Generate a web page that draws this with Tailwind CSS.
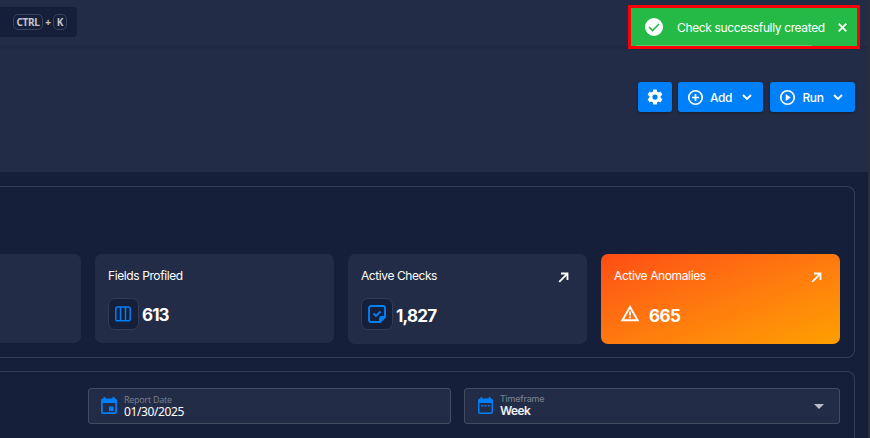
<!DOCTYPE html>
<html lang="en">
<head>
<meta charset="utf-8">
<title>Dashboard</title>
<script src="https://cdn.jsdelivr.net/npm/@tailwindcss/browser@4"></script>
</head>
<body class="relative flex h-[438px] w-[870px] overflow-hidden bg-[#161f39] font-['Inter',sans-serif] text-white">
<div class="flex w-[868px] flex-col">
  <header class="h-[172px] shrink-0 bg-[#232c46]">
    <div class="flex h-[46px] items-start pt-[7px] shadow-[0_1px_3px_rgba(15,20,40,0.3)]">
      <div class="flex h-[30px] w-[77px] items-center rounded-r-[4px] bg-[#161f39] pl-[13px] text-[10px] font-bold text-[#c3c6cf] font-['Noto_Sans',sans-serif]">
        <kbd class="flex h-4 w-[30px] items-center justify-center rounded-[5px] border border-[#3c445b] font-['Noto_Sans',sans-serif] tracking-[-0.35px]">CTRL</kbd>
        <span class="w-[10px] text-center">+</span>
        <kbd class="flex h-4 w-[14px] items-center justify-center rounded-[5px] border border-[#3c445b] font-['Noto_Sans',sans-serif]">K</kbd>
      </div>
    </div>
    <div class="flex justify-end pt-9 pr-[13px] text-[12px] font-medium">
      <button class="flex h-[30px] w-[34px] items-center justify-center rounded-[3px] bg-[#0080f8] shadow-[0_1px_3px_rgba(0,0,0,0.35)]">
        <svg class="size-[18px]" viewBox="0 0 24 24" fill="currentColor"><path d="M12 15.5A3.5 3.5 0 0 1 8.5 12 3.5 3.5 0 0 1 12 8.5a3.5 3.5 0 0 1 3.500 3.500 3.500 3.500 0 0 1-3.500 3.500m7.430-2.530c.040-.320.070-.640.070-.970s-.030-.660-.070-1l2.110-1.630c.190-.150.240-.420.120-.640l-2-3.460c-.120-.220-.390-.310-.610-.220l-2.490 1c-.520-.390-1.060-.730-1.690-.980l-.370-2.650A.506.506 0 0 0 14 2h-4c-.250 0-.460.180-.500.420l-.370 2.650c-.630.250-1.170.590-1.690.980l-2.490-1c-.220-.090-.490 0-.610.220l-2 3.460c-.130.220-.070.490.120.640L4.570 11c-.040.340-.070.670-.070 1s.030.650.070.970l-2.110 1.660c-.190.150-.250.420-.120.640l2 3.460c.120.220.390.300.610.220l2.490-1.010c.520.400 1.060.740 1.690.990l.370 2.650c.040.240.250.420.500.420h4c.250 0 .460-.180.500-.420l.370-2.650c.630-.260 1.170-.590 1.690-.990l2.490 1.010c.220.080.490 0 .610-.220l2-3.460c.120-.220.070-.490-.120-.640z"/></svg>
      </button>
      <button class="ml-[6px] flex h-[30px] w-[85px] items-center rounded-[3px] bg-[#0080f8] pl-[9px] shadow-[0_1px_3px_rgba(0,0,0,0.35)]">
        <svg class="size-[17px]" viewBox="0 0 24 24" fill="none" stroke="currentColor" stroke-width="2.400"><circle cx="12" cy="12" r="9.500"/><path d="M12 7v10M7 12h10"/></svg>
        <span class="ml-[6px] w-[22px] pt-px tracking-[-0.4px]">Add</span>
        <svg class="ml-[10px] size-[10px]" viewBox="0 0 10 10" fill="none" stroke="currentColor" stroke-width="1.900"><path d="m1 3 4 4 4-4"/></svg>
      </button>
      <button class="ml-[7px] flex h-[30px] w-[85px] items-center rounded-[3px] bg-[#0080f8] pl-[9px] shadow-[0_1px_3px_rgba(0,0,0,0.35)]">
        <svg class="size-[17px]" viewBox="0 0 24 24" fill="none" stroke="currentColor" stroke-width="2.400"><circle cx="12" cy="12" r="9.500"/><path d="m9.500 7 7 5-7 5z" fill="currentColor" stroke="none"/></svg>
        <span class="ml-[6px] w-[22px] pt-px tracking-[-0.4px]">Run</span>
        <svg class="ml-[9px] size-[10px]" viewBox="0 0 10 10" fill="none" stroke="currentColor" stroke-width="1.900"><path d="m1 3 4 4 4-4"/></svg>
      </button>
    </div>
  </header>

  <main>
    <section class="mt-[14px] flex h-[172px] w-[855px] items-start gap-[14px] rounded-r-[8px] border border-l-0 border-[#343c54] pt-[67px]">
      <div class="h-[89px] w-[81px] rounded-r-[7px] bg-[#232c46]"></div>
      <div class="h-[89px] w-[239px] rounded-[7px] bg-[#232c46] pt-[14px] pl-[13px]">
        <h3 class="text-[12px] leading-4 tracking-[-0.4px]">Fields Profiled</h3>
        <div class="mt-[14px] flex items-center">
          <div class="flex h-8 w-[31px] items-center justify-center rounded-[7px] border border-[#343c54] bg-[#161f39]">
            <svg class="mr-px size-4 shrink-0" viewBox="0 0 16 16" fill="none" stroke="#0080f8" stroke-width="1.500"><rect x=".8" y="1" width="14.400" height="13.800" rx="1.800"/><path d="M5.500 1v14M10.500 1v14"/></svg>
          </div>
          <span class="ml-[3px] pt-px text-[17px] leading-6 font-bold tracking-[-0.9px]">613</span>
        </div>
      </div>
      <div class="h-[90px] w-[239px] rounded-[7px] bg-[#232c46] pt-[14px] pl-[13px]">
        <div class="flex justify-between pr-[18px]">
          <h3 class="text-[12px] leading-4 tracking-[-0.42px]">Active Checks</h3>
          <svg class="mt-[4px] size-[11px]" viewBox="0 0 11 11" fill="none" stroke="currentColor" stroke-width="1.800"><path d="m1.200 9.800 8-8M3 1.500h6.500V8"/></svg>
        </div>
        <div class="mt-[14px] flex items-center">
          <div class="flex size-8 items-center justify-center rounded-[7px] border border-[#343c54] bg-[#161f39]">
            <svg class="mb-px size-[18px]" viewBox="0 0 18 18" fill="none" stroke="#0080f8" stroke-width="1.900"><path d="M11.500 17H3a2 2 0 0 1-2-2V3a2 2 0 0 1 2-2h12a2 2 0 0 1 2 2v8.500z"/><path d="M12 17v-3.500a1.500 1.500 0 0 1 1.500-1.500H17z" fill="#0080f8"/><path d="m5.500 8.500 2.500 2.500 4.500-4.500"/></svg>
          </div>
          <span class="ml-[3px] pt-[3px] text-[17px] leading-6 font-bold tracking-[-0.75px]">1,827</span>
        </div>
      </div>
      <div class="h-[90px] w-[239px] rounded-[7px] bg-linear-to-br from-[#ff4b15] to-[#ff9f00] pt-[14px] pl-[13px]">
        <div class="flex justify-between pr-[18px]">
          <h3 class="text-[12px] leading-4 tracking-[-0.38px]">Active Anomalies</h3>
          <svg class="mt-[4px] size-[11px]" viewBox="0 0 11 11" fill="none" stroke="currentColor" stroke-width="1.800"><path d="m1.200 9.800 8-8M3 1.500h6.500V8"/></svg>
        </div>
        <div class="mt-[14px] flex h-8 items-center pl-[6px]">
          <svg class="mb-px h-[17px] w-5" viewBox="0 0 20 17" fill="none" stroke="currentColor" stroke-width="1.900"><path d="M10 2 2.400 15.200h15.200zM10 6.500v4M10 11.500v1.800"/></svg>
          <span class="ml-[9px] pt-[3px] text-[17px] leading-6 font-bold tracking-[-0.5px]">665</span>
        </div>
      </div>
    </section>

    <section class="mt-[13px] flex h-[80px] w-[855px] items-start rounded-tr-[8px] border border-l-0 border-[#343c54] pt-4 pl-[88px]">
      <div class="flex h-9 w-[363px] rounded-[3px] border border-[#434b61] bg-[#232c46] pl-[12px]">
        <svg class="mt-[8px] h-[17px] w-4" viewBox="0 0 16 17" fill="#0080f8"><path fill-rule="evenodd" d="M2.500 0h2v1.500h7V0h2v1.500H14a2 2 0 0 1 2 2V15a2 2 0 0 1-2 2H2a2 2 0 0 1-2-2V3.500a2 2 0 0 1 2-2h.500zM1.700 6v9.300h12.600V6z"/><path d="M8 9.500h4.500v4.500H8z"/></svg>
        <div class="ml-[7px] pt-[6px]">
          <div class="text-[9px] leading-[10px] text-[#7c8190] font-['Open_Sans',sans-serif] tracking-[-0.25px]">Report Date</div>
          <div class="text-[12px] leading-[14px] font-['Noto_Sans',sans-serif] tracking-[-0.4px]">01/30/2025</div>
        </div>
      </div>
      <div class="ml-[13px] flex h-9 w-[376px] rounded-[3px] border border-[#434b61] bg-[#232c46] pl-[13px]">
        <svg class="mt-[8px] h-[17px] w-[15px]" viewBox="0 0 15 17" fill="#0080f8"><path fill-rule="evenodd" d="M2.500 0h1.700v1.500h6.600V0h1.700v1.500h.5a2 2 0 0 1 2 2V15a2 2 0 0 1-2 2H2a2 2 0 0 1-2-2V3.500a2 2 0 0 1 2-2h.500zM1.500 6v9.500h12V6z"/><path d="M3.200 8h2v1.500h-2zM6.500 8h2v1.500h-2zM9.800 8h2v1.500h-2z"/></svg>
        <div class="ml-[7px] pt-[5px]">
          <div class="text-[9px] leading-[10px] text-[#7c8190] tracking-[-0.2px]">Timeframe</div>
          <div class="text-[12px] leading-[14px] font-semibold text-[#eef0f4] tracking-[-0.6px]">Week</div>
        </div>
        <svg class="mt-[15px] mr-[15px] ml-auto h-[5px] w-[10px]" viewBox="0 0 10 5" fill="#b9bdc7"><path d="M0 0h10L5 5z"/></svg>
      </div>
    </section>
  </main>
</div>
<div class="w-[2px] bg-[#2c2d38]"></div>

<div class="absolute top-[5px] left-[628px] flex h-[44px] w-[232px] items-center border-[3px] border-[#fb0007] bg-[#24ba45] pl-[14px]">
  <svg class="mb-px size-[18px]" viewBox="0 0 18 18"><circle cx="9" cy="9" r="9" fill="#fff"/><path d="m4 9 3.500 3.500L14 6" fill="none" stroke="#24ba45" stroke-width="1.600"/></svg>
  <span class="ml-[14px] w-[149px] pt-px whitespace-nowrap text-[12px] leading-4 tracking-[-0.36px]">Check successfully created</span>
  <svg class="ml-3 size-[9px]" viewBox="0 0 9 9" fill="none" stroke="#fff" stroke-width="1.700"><path d="m.7.7 7.600 7.600M8.300.7.7 8.300"/></svg>
  <div class="absolute bottom-0 left-[5px] h-px w-[176px] bg-[#5bcb70]"></div>
</div>
</body>
</html>
